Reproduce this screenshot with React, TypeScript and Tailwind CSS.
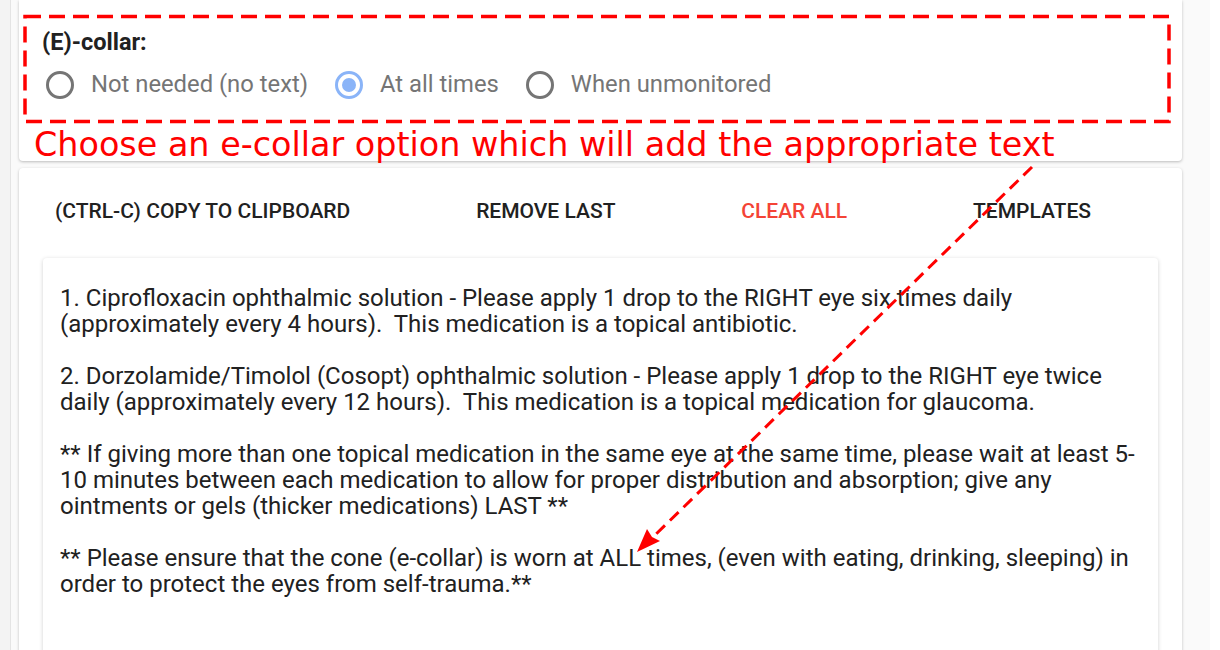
import React from "react"

const options = [
  { label: "Not needed (no text)", checked: false },
  { label: "At all times", checked: true },
  { label: "When unmonitored", checked: false },
]

const actions = [
  { label: "(CTRL-C) COPY TO CLIPBOARD", danger: false },
  { label: "REMOVE LAST", danger: false },
  { label: "CLEAR ALL", danger: true },
  { label: "TEMPLATES", danger: false },
]

const paragraphs = [
  [
    "1. Ciprofloxacin ophthalmic solution - Please apply 1 drop to the RIGHT eye six times daily",
    "(approximately every 4 hours).  This medication is a topical antibiotic.",
  ],
  [
    "2. Dorzolamide/Timolol (Cosopt) ophthalmic solution - Please apply 1 drop to the RIGHT eye twice",
    "daily (approximately every 12 hours).  This medication is a topical medication for glaucoma.",
  ],
  [
    "** If giving more than one topical medication in the same eye at the same time, please wait at least 5-",
    "10 minutes between each medication to allow for proper distribution and absorption; give any",
    "ointments or gels (thicker medications) LAST **",
  ],
  [
    "** Please ensure that the cone (e-collar) is worn at ALL times, (even with eating, drinking, sleeping) in",
    "order to protect the eyes from self-trauma.**",
  ],
]

function Radio({ checked }: { checked: boolean }) {
  return (
    <span
      className={
        checked
          ? "flex items-center justify-center w-[28px] h-[28px] rounded-full border-[3px] border-[#8ab4f8]"
          : "flex items-center justify-center w-[28px] h-[28px] rounded-full border-[3px] border-[#757575]"
      }
    >
      {checked && <span className="w-[14px] h-[14px] rounded-full bg-[#8ab4f8]" />}
    </span>
  )
}

function Annotation() {
  return (
    <div className="absolute inset-0 pointer-events-none">
      <svg width="1220" height="650" className="absolute left-0 top-0">
        <rect
          x="25"
          y="16.5"
          width="1144"
          height="105"
          fill="none"
          stroke="#ff0000"
          strokeWidth="3.5"
          strokeDasharray="16 8"
        />
        <line
          x1="1032"
          y1="167"
          x2="652"
          y2="538"
          stroke="#ff0000"
          strokeWidth="3"
          strokeDasharray="12 7"
        />
        <polygon points="637,552 647,529 652,537 660,541" fill="#ff0000" />
      </svg>
      <div className="absolute left-[34px] top-[125px] text-[33.4px] leading-[40px] text-[#ff0000] whitespace-nowrap font-['DejaVu_Sans',sans-serif]">
        Choose an e-collar option which will add the appropriate text
      </div>
    </div>
  )
}

export default function App() {
  return (
    <div className="relative w-[1220px] h-[650px] overflow-hidden bg-white font-['Roboto',sans-serif]">
      <div className="flex h-full">
        <div className="w-[10px] bg-[#f3f3f3]" />
        <div className="w-[1200px] h-full bg-[#fafafa] border-l border-[#e4e4e4] pl-[8px] pr-[28px]">
          <div className="h-[161px] bg-white rounded-b-[4px] shadow-[0_1px_3px_rgba(0,0,0,0.25)] pt-[29px] pl-[23px]">
            <div className="text-[23.5px] leading-[26px] font-bold text-[#212121]">(E)-collar:</div>
            <div className="flex items-center mt-[15px] ml-[4px]">
              {options.map((o) => (
                <div key={o.label} className="flex items-center h-[30px] mr-[27px]">
                  <Radio checked={o.checked} />
                  <span className="ml-[17px] text-[23.8px] text-[#757575]">{o.label}</span>
                </div>
              ))}
            </div>
          </div>

          <div className="mt-[7px] h-[600px] bg-white rounded-[4px] shadow-[0_1px_3px_rgba(0,0,0,0.25)] pt-[26px]">
            <div className="flex justify-between items-center h-[36px] pl-[36px] pr-[91px]">
              {actions.map((a) => (
                <span
                  key={a.label}
                  className={
                    a.danger
                      ? "text-[21px] font-medium text-[#f44336]"
                      : "text-[21px] font-medium text-[#212121]"
                  }
                >
                  {a.label}
                </span>
              ))}
            </div>
            <div className="mt-[28px] mx-[24px] h-[420px] bg-white rounded-[4px] shadow-[0_1px_4px_rgba(0,0,0,0.18)] pt-[27px] pl-[17px] pr-[18px] text-[24px] leading-[26px] text-[#212121]">
              {paragraphs.map((p, i) => (
                <div key={i} className={i > 0 ? "mt-[26px]" : ""}>
                  {p.map((line) => (
                    <div key={line} className="whitespace-pre">
                      {line}
                    </div>
                  ))}
                </div>
              ))}
            </div>
          </div>
        </div>
      </div>
      <Annotation />
    </div>
  )
}
